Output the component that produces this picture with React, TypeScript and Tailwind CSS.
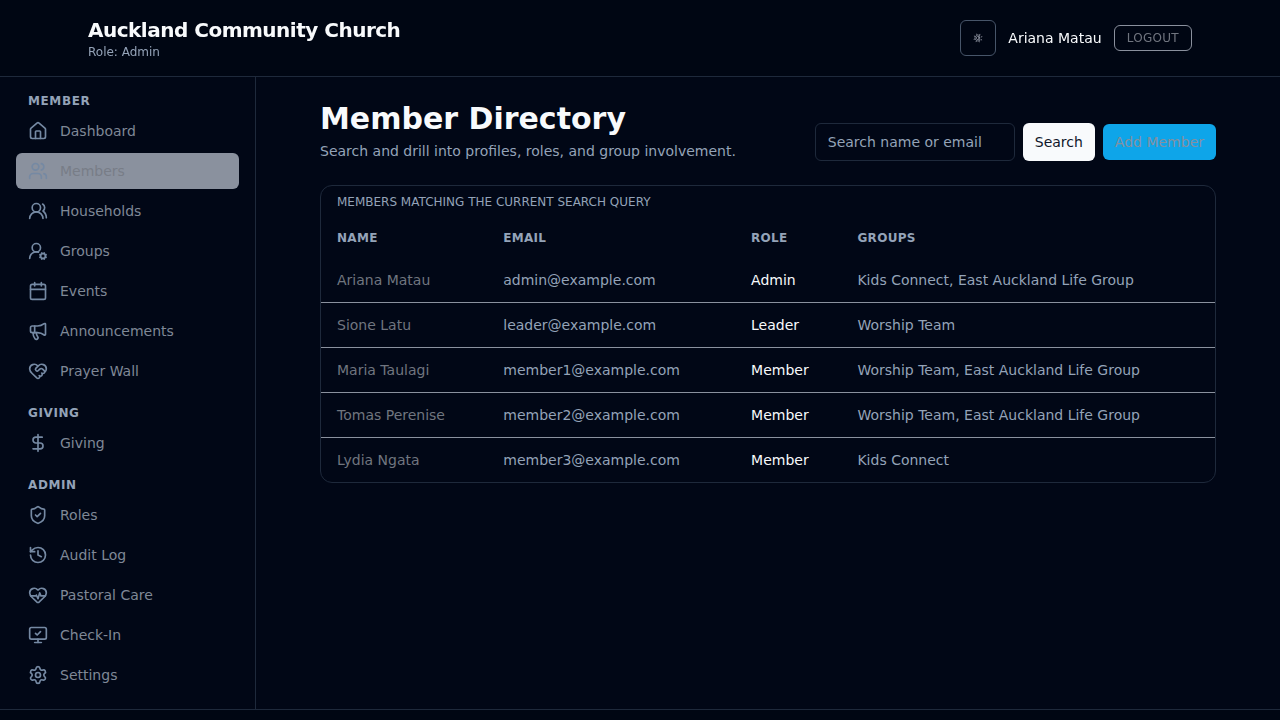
import {
  Calendar, DollarSign, HeartHandshake, HeartPulse, History, House, Megaphone, MonitorCheck,
  Moon, Settings, ShieldCheck, Sun, UserRoundCog, Users, UsersRound, type LucideIcon,
} from 'lucide-react';

type NavItem = { label: string; icon: LucideIcon; active?: boolean };

const sections: { title: string; items: NavItem[] }[] = [
  {
    title: 'Member',
    items: [
      { label: 'Dashboard', icon: House },
      { label: 'Members', icon: Users, active: true },
      { label: 'Households', icon: UsersRound },
      { label: 'Groups', icon: UserRoundCog },
      { label: 'Events', icon: Calendar },
      { label: 'Announcements', icon: Megaphone },
      { label: 'Prayer Wall', icon: HeartHandshake },
    ],
  },
  { title: 'Giving', items: [{ label: 'Giving', icon: DollarSign }] },
  {
    title: 'Admin',
    items: [
      { label: 'Roles', icon: ShieldCheck },
      { label: 'Audit Log', icon: History },
      { label: 'Pastoral Care', icon: HeartPulse },
      { label: 'Check-In', icon: MonitorCheck },
      { label: 'Settings', icon: Settings },
    ],
  },
];

const members = [
  ['Ariana Matau', 'admin@example.com', 'Admin', 'Kids Connect, East Auckland Life Group'],
  ['Sione Latu', 'leader@example.com', 'Leader', 'Worship Team'],
  ['Maria Taulagi', 'member1@example.com', 'Member', 'Worship Team, East Auckland Life Group'],
  ['Tomas Perenise', 'member2@example.com', 'Member', 'Worship Team, East Auckland Life Group'],
  ['Lydia Ngata', 'member3@example.com', 'Member', 'Kids Connect'],
];

function Header() {
  return (
    <header className="shrink-0 border-b border-[#1e293b] bg-[#000613] will-change-transform">
      <div className="mx-auto flex max-w-6xl items-center justify-between px-6 py-4">
        <div>
          <p className="text-xl leading-7 font-semibold tracking-tight text-slate-50">Auckland Community Church</p>
          <p className="text-xs text-[#94a3b8]">Role: Admin</p>
        </div>
        <div className="flex items-center gap-3">
          <button
            type="button"
            aria-label="Theme"
            className="flex size-9 items-center justify-center rounded-md border border-[#475569] text-[#8a909d]"
          >
            <span className="relative block size-2.5">
              <Sun className="size-2.5 -rotate-[18deg]" />
              <Moon className="absolute inset-0 size-2.5 rotate-45 scale-80" />
            </span>
          </button>
          <span className="text-sm text-slate-50">Ariana Matau</span>
          <button
            type="button"
            className="rounded-md border border-[#8a909d] px-3 py-1 text-xs tracking-wide text-[#70757f] uppercase"
          >
            Logout
          </button>
        </div>
      </div>
    </header>
  );
}

function Sidebar() {
  return (
    <aside className="w-64 shrink-0 border-r border-[#1e293b] p-4">
      <nav className="flex flex-col gap-4">
        {sections.map((section) => (
          <div key={section.title} className="flex flex-col gap-1">
            <h2 className="px-3 text-xs font-semibold tracking-wider text-[#94a3b8] uppercase">{section.title}</h2>
            {section.items.map(({ label, icon: Icon, active }) => (
              <a
                key={label}
                href="#"
                className={
                  active
                    ? 'flex items-center gap-3 rounded-md bg-[#8a919e] px-3 py-2 text-sm text-[#787d87]'
                    : 'flex items-center gap-3 rounded-md px-3 py-2 text-sm text-[#7f8896]'
                }
              >
                <Icon className="size-5 text-[#7589a3]" strokeWidth={2} />
                {label}
              </a>
            ))}
          </div>
        ))}
      </nav>
    </aside>
  );
}

function MemberTable() {
  return (
    <div className="overflow-hidden rounded-xl border border-[#1e293b]">
      <table className="w-full text-left text-sm">
        <caption className="px-4 py-2 text-left text-xs text-[#94a3b8] uppercase">
          Members matching the current search query
        </caption>
        <thead className="text-xs tracking-wide text-[#94a3b8] uppercase">
          <tr>
            {['Name', 'Email', 'Role', 'Groups'].map((heading) => (
              <th key={heading} className="px-4 py-3 font-semibold">{heading}</th>
            ))}
          </tr>
        </thead>
        <tbody className="divide-y divide-[#8a919e]">
          {members.map(([name, email, role, groups]) => (
            <tr key={email}>
              <td className="px-4 py-3 text-[#70757f]">{name}</td>
              <td className="px-4 py-3 text-[#94a3b8]">{email}</td>
              <td className="px-4 py-3 text-slate-50">{role}</td>
              <td className="px-4 py-3 text-[#94a3b8]">{groups}</td>
            </tr>
          ))}
        </tbody>
      </table>
    </div>
  );
}

export default function App() {
  return (
    <div className="flex h-screen flex-col overflow-hidden bg-[#010716] font-['DejaVu_Sans',sans-serif]">
      <Header />
      <div className="flex shrink-0">
        <Sidebar />
        <main className="flex flex-1 flex-col gap-6 px-16 py-6">
          <div className="flex items-end justify-between">
            <div>
              <h1 className="text-3xl leading-9 font-semibold text-slate-50">Member Directory</h1>
              <p className="mt-1 text-sm text-[#94a3b8]">Search and drill into profiles, roles, and group involvement.</p>
            </div>
            <div className="flex items-center gap-2">
              <input
                placeholder="Search name or email"
                className="h-[38px] w-[200px] rounded-md border border-[#1e293b] px-3 text-sm text-slate-50 placeholder:text-[#94a3b8]"
              />
              <button type="button" className="h-[38px] rounded-md bg-slate-50 px-3 text-sm text-[#0f172a]">Search</button>
              <a href="#" className="rounded-md bg-[#0ea5e9] px-3 py-2 text-sm text-[#8490a0]">Add Member</a>
            </div>
          </div>
          <MemberTable />
        </main>
      </div>
      <footer className="min-h-0 flex-1 border-t border-[#1e293b] bg-[#000613]" />
    </div>
  );
}
